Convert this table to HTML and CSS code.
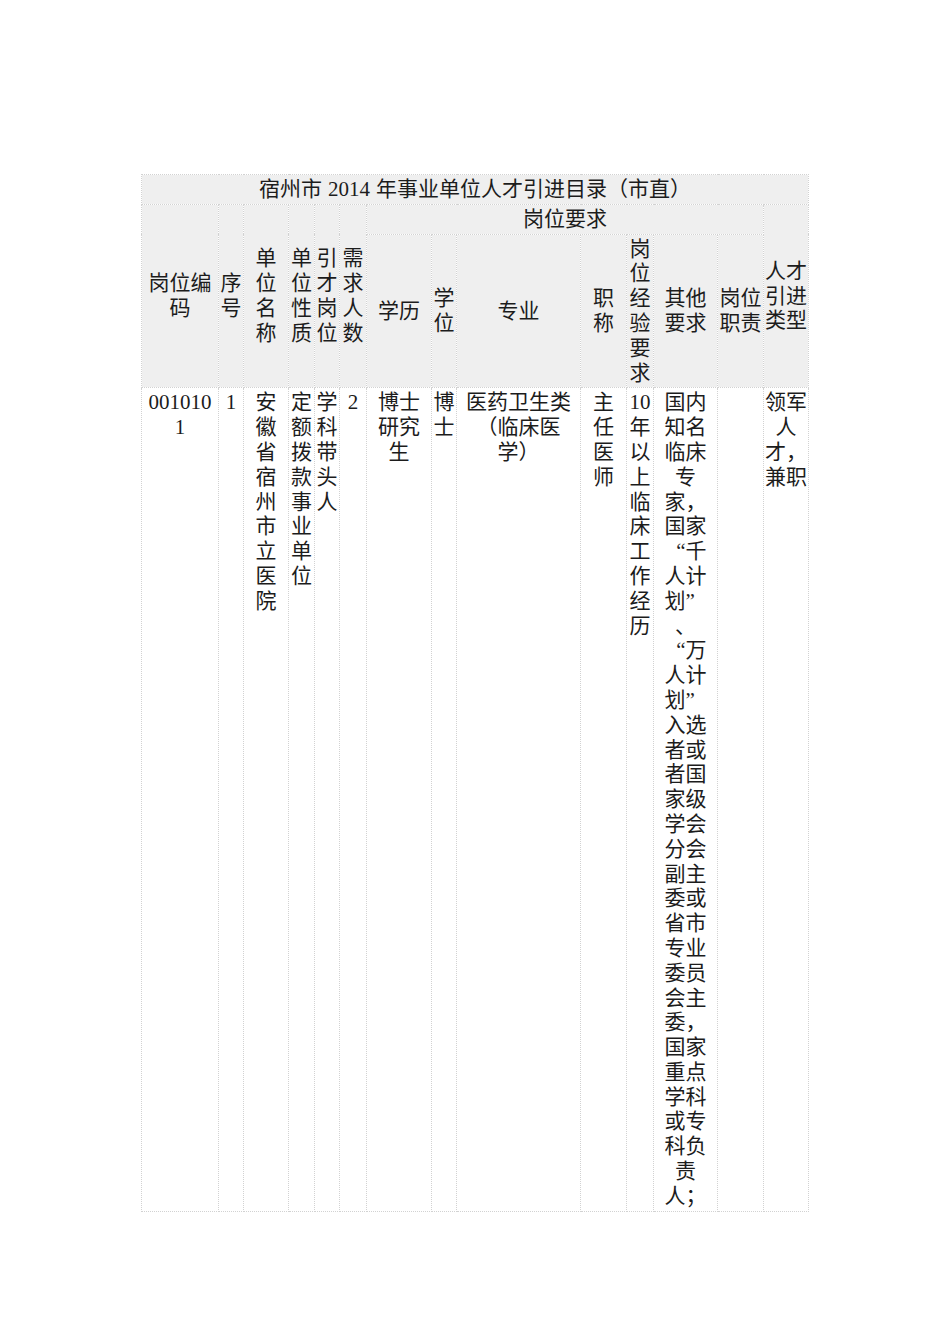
FILE: index.html
```html
<!DOCTYPE html>
<html lang="zh-CN">
<head>
<meta charset="utf-8">
<title>宿州市2014年事业单位人才引进目录（市直）</title>
<link rel="stylesheet" href="styles.css">
</head>
<body>
<div class="page">
<table class="catalog">
<colgroup>
<col class="c-code"><col class="c-no"><col class="c-unit"><col class="c-nature"><col class="c-post"><col class="c-num">
<col class="c-edu"><col class="c-deg"><col class="c-major"><col class="c-title"><col class="c-exp"><col class="c-other"><col class="c-duty"><col class="c-type">
</colgroup>
<tr class="head-row r-title"><td colspan="14">宿州市<span class="latin">2014</span>年事业单位人才引进目录（市直）</td></tr>
<tr class="head-row r-group">
<td rowspan="2">岗位编<br>码</td>
<td rowspan="2">序<br>号</td>
<td rowspan="2">单<br>位<br>名<br>称</td>
<td rowspan="2">单<br>位<br>性<br>质</td>
<td rowspan="2">引<br>才<br>岗<br>位</td>
<td rowspan="2">需<br>求<br>人<br>数</td>
<td colspan="7">岗位要求</td>
<td rowspan="2">人才<br>引进<br>类型</td>
</tr>
<tr class="head-row r-sub">
<td>学历</td>
<td>学<br>位</td>
<td>专业</td>
<td>职<br>称</td>
<td>岗<br>位<br>经<br>验<br>要<br>求</td>
<td>其他<br>要求</td>
<td>岗位<br>职责</td>
</tr>
<tr class="body-row">
<td>001010<br>1</td>
<td>1</td>
<td>安<br>徽<br>省<br>宿<br>州<br>市<br>立<br>医<br>院</td>
<td>定<br>额<br>拨<br>款<br>事<br>业<br>单<br>位</td>
<td>学<br>科<br>带<br>头<br>人</td>
<td>2</td>
<td>博士<br>研究<br>生</td>
<td>博<br>士</td>
<td>医药卫生类<br>（临床医<br>学）</td>
<td>主<br>任<br>医<br>师</td>
<td>10<br>年<br>以<br>上<br>临<br>床<br>工<br>作<br>经<br>历</td>
<td>国内<br>知名<br>临床<br>专<br>家，<br>国家<br><span class="q-open">“</span>千<br>人计<br>划<span class="q-close">”</span><br>、<br><span class="q-open">“</span>万<br>人计<br>划<span class="q-close">”</span><br>入选<br>者或<br>者国<br>家级<br>学会<br>分会<br>副主<br>委或<br>省市<br>专业<br>委员<br>会主<br>委，<br>国家<br>重点<br>学科<br>或专<br>科负<br>责<br>人；</td>
<td></td>
<td>领军<br>人<br>才，<br>兼职</td>
</tr>
</table>
</div>
</body>
</html>
```
FILE: styles.css
```css
html, body {
  margin: 0;
  padding: 0;
  background: #ffffff;
}
.page {
  padding: 174px 0 0 141px;
}
.catalog {
  border-collapse: collapse;
  table-layout: fixed;
  width: 667px;
  font-family: "Liberation Serif", "Noto Sans CJK SC", serif;
  font-size: 21px;
  line-height: 24.8px;
  color: #1c1c1c;
}
.catalog td {
  border: 1px dotted #d2d2d2;
  padding: 2px 0;
  text-align: center;
  vertical-align: middle;
  overflow: hidden;
  white-space: nowrap;
}
.head-row td {
  background: #efefef;
}
.body-row td {
  background: #ffffff;
  vertical-align: top;
}
.latin {
  margin: 0 6px;
}
.q-open,
.q-close {
  display: inline-block;
  width: 21px;
  font-family: "Liberation Serif", serif;
}
.q-open {
  text-align: right;
}
.q-close {
  text-align: left;
}
.c-code { width: 77px; }
.c-no { width: 25px; }
.c-unit { width: 45px; }
.c-nature { width: 26px; }
.c-post { width: 25px; }
.c-num { width: 27px; }
.c-edu { width: 65px; }
.c-deg { width: 25px; }
.c-major { width: 124px; }
.c-title { width: 46px; }
.c-exp { width: 27px; }
.c-other { width: 64px; }
.c-duty { width: 46px; }
.c-type { width: 45px; }
```
